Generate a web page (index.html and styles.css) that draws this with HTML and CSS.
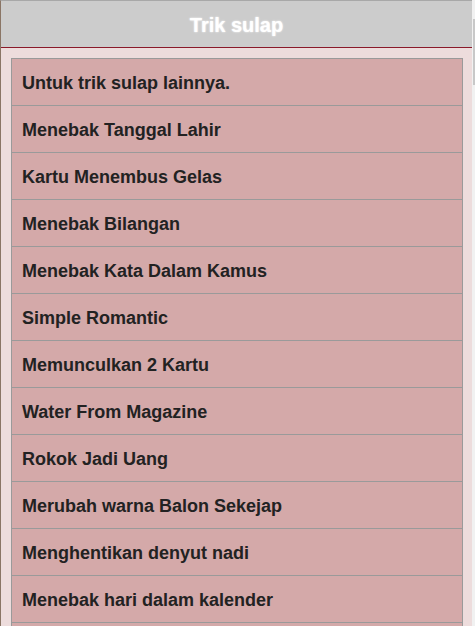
FILE: index.html
```html
<!DOCTYPE html>
<html>
<head>
<meta charset="utf-8">
<link rel="stylesheet" href="styles.css">
</head>
<body>
<div class="app">
  <div class="page">
    <header class="header"><h1 class="title">Trik sulap</h1></header>
    <main class="content">
      <ul class="list">
        <li class="item">Untuk trik sulap lainnya.</li>
        <li class="item">Menebak Tanggal Lahir</li>
        <li class="item">Kartu Menembus Gelas</li>
        <li class="item">Menebak Bilangan</li>
        <li class="item">Menebak Kata Dalam Kamus</li>
        <li class="item">Simple Romantic</li>
        <li class="item">Memunculkan 2 Kartu</li>
        <li class="item">Water From Magazine</li>
        <li class="item">Rokok Jadi Uang</li>
        <li class="item">Merubah warna Balon Sekejap</li>
        <li class="item">Menghentikan denyut nadi</li>
        <li class="item">Menebak hari dalam kalender</li>
        <li class="item"></li>
      </ul>
    </main>
  </div>
  <div class="scrollbar"><div class="thumb"></div></div>
</div>
</body>
</html>
```
FILE: styles.css
```css
html, body {
  margin: 0;
  padding: 0;
  height: 100%;
  overflow: hidden;
  background: #f1f1f1;
}
.app {
  display: flex;
  height: 626px;
  font-family: "Liberation Sans", Arial, sans-serif;
}
.page {
  width: 471px;
  border-left: 1px solid #8a7565;
  border-top: 1px solid #a8a8a8;
  background: #eddcdc;
  display: flex;
  flex-direction: column;
  overflow: hidden;
}
.header {
  height: 46px;
  background: #cccccc;
  border-bottom: 1px solid #8a1a2a;
  display: flex;
  align-items: center;
  justify-content: center;
  flex-shrink: 0;
}
.title {
  margin: 2px 0 0 0;
  font-size: 20px;
  font-weight: bold;
  color: #ffffff;
  text-shadow: 0 0 2px #ffffff;
}
.content {
  padding: 10px 9px 10px 10px;
}
.list {
  list-style: none;
  margin: 0;
  padding: 0;
  border: 1px solid #9a9a9a;
  border-bottom: none;
}
.item {
  height: 46px;
  line-height: 48px;
  padding: 0 10px;
  background: #d4a9a9;
  border-bottom: 1px solid #9a9a9a;
  color: #222222;
  font-size: 18px;
  font-weight: bold;
}
.scrollbar {
  width: 3px;
  background: #f1f1f1;
  position: relative;
}
.thumb {
  position: absolute;
  left: 1px;
  top: 19px;
  width: 2px;
  height: 66px;
  background: #c8c8c8;
}
```
